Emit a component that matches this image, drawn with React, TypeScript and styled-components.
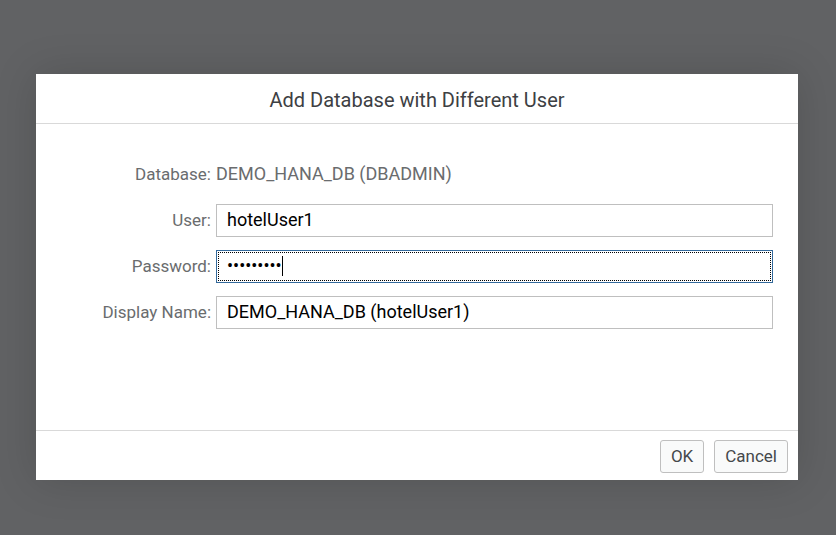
import React, { useState } from "react";
import styled, { createGlobalStyle } from "styled-components";

const GlobalStyle = createGlobalStyle`
  * { box-sizing: border-box; }
  body {
    margin: 0;
    background: #616264;
    font-family: Roboto, "Liberation Sans", Arial, sans-serif;
    font-size: 17px;
    color: #6a6c6e;
  }
`;

const Overlay = styled.main`
  min-height: 100vh;
  display: flex;
  align-items: center;
  padding: 72px 38px 53px 36px;
`;

const Dialog = styled.form`
  flex: 1;
  background: #fff;
  box-shadow: 0 0 40px rgba(0, 0, 0, 0.15);
`;

const Header = styled.header`
  height: 50px;
  display: flex;
  align-items: center;
  justify-content: center;
  padding-top: 2px;
  border-bottom: 1px solid #d9d9d9;
`;

const Title = styled.h1`
  margin: 0;
  font-size: 20px;
  font-weight: 400;
  line-height: 24px;
  color: #3d4043;
`;

const Content = styled.div`
  display: grid;
  grid-template-columns: 150px 1fr;
  grid-template-rows: 32px;
  grid-auto-rows: 33px;
  gap: 13px 5px;
  align-items: center;
  padding: 35px 25px 101px;
`;

const Label = styled.label`
  justify-self: end;
  white-space: nowrap;
  line-height: 20px;
  padding-bottom: 2px;
`;

const Value = styled.output`
  padding-bottom: 2px;
  font-size: 18px;
  line-height: 20px;
`;

const Input = styled.input`
  width: 100%;
  height: 33px;
  padding: 0 10px 2px;
  border: 1px solid #bfbfbf;
  border-radius: 0;
  background: #fff;
  color: #000;
  font: inherit;
  font-size: 18px;
  &:focus {
    outline: 1px dotted #000;
    outline-offset: -3px;
    border-color: #346a9c;
  }
`;

const Caret = styled.span`
  position: absolute;
  top: 6px;
  width: 1px;
  height: 20px;
  background: #000;
  pointer-events: none;
  visibility: hidden;
`;

const PasswordField = styled.div`
  position: relative;
  display: flex;
  ${Input} {
    caret-color: transparent;
  }
  &:focus-within ${Caret} {
    visibility: visible;
  }
`;

const Footer = styled.footer`
  display: flex;
  justify-content: flex-end;
  gap: 10px;
  padding: 9px 10px 7px;
  border-top: 1px solid #d9d9d9;
`;

const Button = styled.button`
  height: 33px;
  padding: 0 10px 2px;
  border: 1px solid #bfbfbf;
  border-radius: 3px;
  background: #f9fafa;
  color: #45484b;
  font: inherit;
`;

export default function App() {
  const [user, setUser] = useState("hotelUser1");
  const [password, setPassword] = useState("password1");
  const [name, setName] = useState("DEMO_HANA_DB (hotelUser1)");
  return (
    <>
      <GlobalStyle />
      <Overlay>
        <Dialog role="dialog" aria-labelledby="title" onSubmit={(e) => e.preventDefault()}>
          <Header>
            <Title id="title">Add Database with Different User</Title>
          </Header>
          <Content>
            <Label htmlFor="database">Database:</Label>
            <Value id="database">DEMO_HANA_DB (DBADMIN)</Value>
            <Label htmlFor="user">User:</Label>
            <Input id="user" value={user} onChange={(e) => setUser(e.target.value)} />
            <Label htmlFor="password">Password:</Label>
            <PasswordField>
              <Input
                id="password"
                type="password"
                autoFocus
                value={password}
                onChange={(e) => setPassword(e.target.value)}
              />
              <Caret aria-hidden="true" style={{ left: 12 + password.length * 6 }} />
            </PasswordField>
            <Label htmlFor="name">Display Name:</Label>
            <Input id="name" value={name} onChange={(e) => setName(e.target.value)} />
          </Content>
          <Footer>
            <Button type="submit">OK</Button>
            <Button type="button">Cancel</Button>
          </Footer>
        </Dialog>
      </Overlay>
    </>
  );
}
